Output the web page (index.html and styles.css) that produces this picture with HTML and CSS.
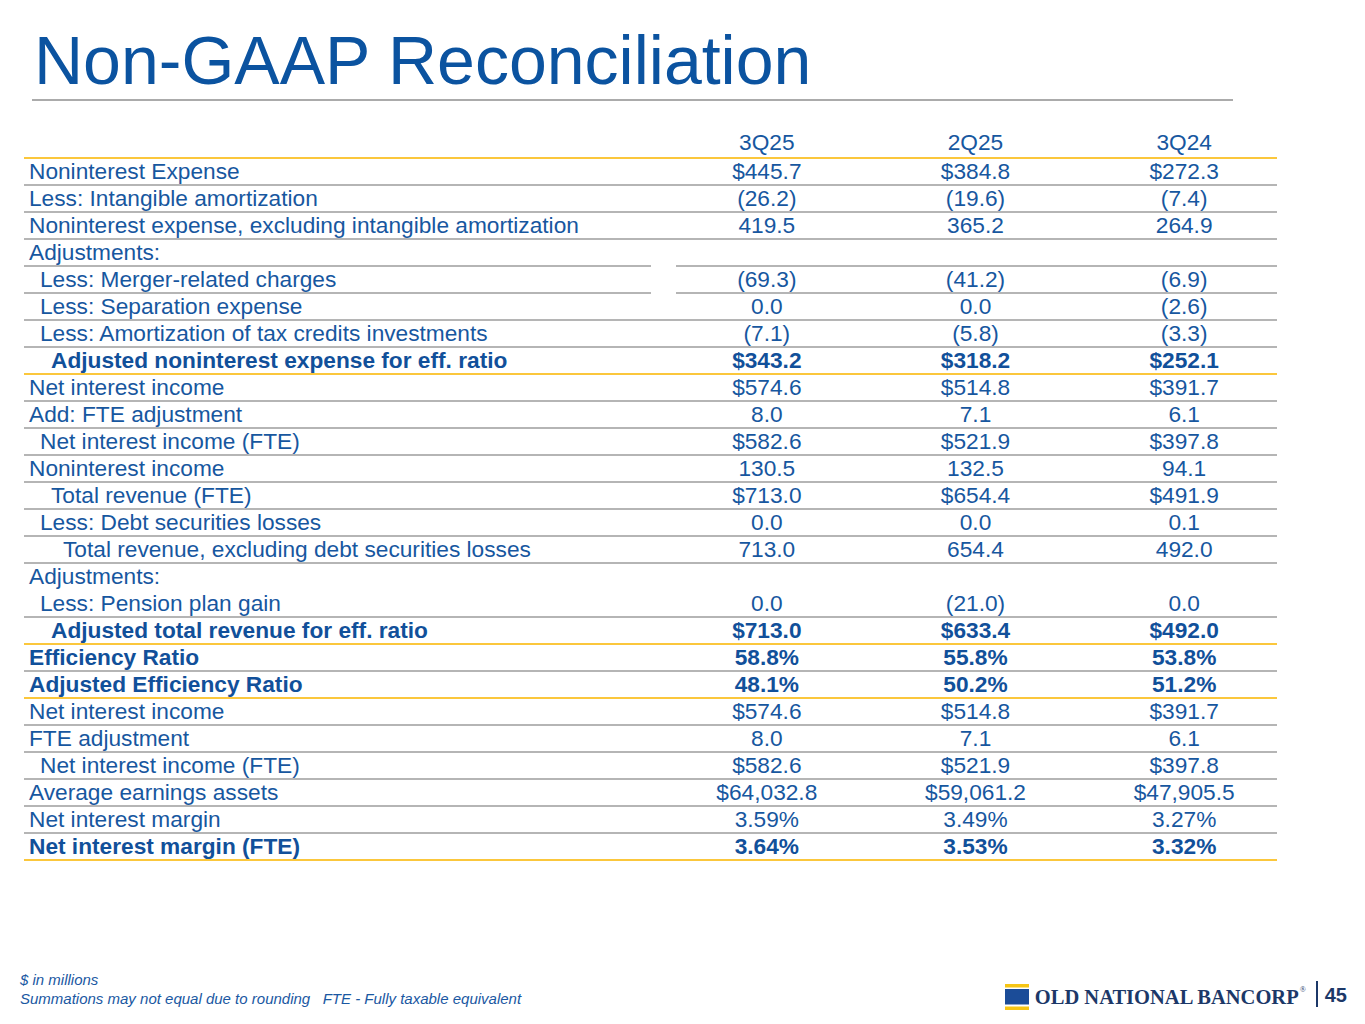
FILE: index.html
```html
<!DOCTYPE html>
<html lang="en">
<head>
<meta charset="utf-8">
<title>Non-GAAP Reconciliation</title>
<link rel="stylesheet" href="styles.css">
</head>
<body>
<div class="slide">
  <h1 class="title">Non-GAAP Reconciliation</h1>
  <div class="rule"></div>

  <div class="table">
    <div class="row head"><div class="label"></div><div class="num">3Q25</div><div class="num">2Q25</div><div class="num">3Q24</div></div>
    <div class="row"><div class="label">Noninterest Expense</div><div class="num">$445.7</div><div class="num">$384.8</div><div class="num">$272.3</div></div>
    <div class="row"><div class="label">Less: Intangible amortization</div><div class="num">(26.2)</div><div class="num">(19.6)</div><div class="num">(7.4)</div></div>
    <div class="row"><div class="label">Noninterest expense, excluding intangible amortization</div><div class="num">419.5</div><div class="num">365.2</div><div class="num">264.9</div></div>
    <div class="row split"><div class="label">Adjustments:</div><div class="num gap"></div><div class="num"></div><div class="num"></div></div>
    <div class="row split"><div class="label i1">Less: Merger-related charges</div><div class="num gap">(69.3)</div><div class="num">(41.2)</div><div class="num">(6.9)</div></div>
    <div class="row"><div class="label i1">Less: Separation expense</div><div class="num">0.0</div><div class="num">0.0</div><div class="num">(2.6)</div></div>
    <div class="row"><div class="label i1">Less: Amortization of tax credits investments</div><div class="num">(7.1)</div><div class="num">(5.8)</div><div class="num">(3.3)</div></div>
    <div class="row bold gold"><div class="label i2">Adjusted noninterest expense for eff. ratio</div><div class="num">$343.2</div><div class="num">$318.2</div><div class="num">$252.1</div></div>
    <div class="row"><div class="label">Net interest income</div><div class="num">$574.6</div><div class="num">$514.8</div><div class="num">$391.7</div></div>
    <div class="row"><div class="label">Add: FTE adjustment</div><div class="num">8.0</div><div class="num">7.1</div><div class="num">6.1</div></div>
    <div class="row"><div class="label i1">Net interest income (FTE)</div><div class="num">$582.6</div><div class="num">$521.9</div><div class="num">$397.8</div></div>
    <div class="row"><div class="label">Noninterest income</div><div class="num">130.5</div><div class="num">132.5</div><div class="num">94.1</div></div>
    <div class="row"><div class="label i2">Total revenue (FTE)</div><div class="num">$713.0</div><div class="num">$654.4</div><div class="num">$491.9</div></div>
    <div class="row"><div class="label i1">Less: Debt securities losses</div><div class="num">0.0</div><div class="num">0.0</div><div class="num">0.1</div></div>
    <div class="row"><div class="label i3">Total revenue, excluding debt securities losses</div><div class="num">713.0</div><div class="num">654.4</div><div class="num">492.0</div></div>
    <div class="row none"><div class="label">Adjustments:</div><div class="num"></div><div class="num"></div><div class="num"></div></div>
    <div class="row"><div class="label i1">Less: Pension plan gain</div><div class="num">0.0</div><div class="num">(21.0)</div><div class="num">0.0</div></div>
    <div class="row bold gold"><div class="label i2">Adjusted total revenue for eff. ratio</div><div class="num">$713.0</div><div class="num">$633.4</div><div class="num">$492.0</div></div>
    <div class="row bold"><div class="label">Efficiency Ratio</div><div class="num">58.8%</div><div class="num">55.8%</div><div class="num">53.8%</div></div>
    <div class="row bold gold"><div class="label">Adjusted Efficiency Ratio</div><div class="num">48.1%</div><div class="num">50.2%</div><div class="num">51.2%</div></div>
    <div class="row"><div class="label">Net interest income</div><div class="num">$574.6</div><div class="num">$514.8</div><div class="num">$391.7</div></div>
    <div class="row"><div class="label">FTE adjustment</div><div class="num">8.0</div><div class="num">7.1</div><div class="num">6.1</div></div>
    <div class="row"><div class="label i1">Net interest income (FTE)</div><div class="num">$582.6</div><div class="num">$521.9</div><div class="num">$397.8</div></div>
    <div class="row"><div class="label">Average earnings assets</div><div class="num">$64,032.8</div><div class="num">$59,061.2</div><div class="num">$47,905.5</div></div>
    <div class="row"><div class="label">Net interest margin</div><div class="num">3.59%</div><div class="num">3.49%</div><div class="num">3.27%</div></div>
    <div class="row bold gold"><div class="label">Net interest margin (FTE)</div><div class="num">3.64%</div><div class="num">3.53%</div><div class="num">3.32%</div></div>
  </div>

  <footer class="footer">
    <div class="notes">
      <div>$ in millions</div>
      <div>Summations may not equal due to rounding&nbsp;&nbsp; FTE - Fully taxable equivalent</div>
    </div>
    <div class="brand">
      <svg class="emblem" width="24" height="27" viewBox="0 0 24 27" aria-hidden="true">
        <rect x="0" y="0" width="24" height="3.5" fill="#f6c514"/>
        <rect x="0" y="5" width="24" height="15.5" fill="#1b4c98"/>
        <rect x="0" y="22.5" width="24" height="3.5" fill="#f6c514"/>
      </svg>
      <span class="name">OLD NATIONAL BANCORP</span><span class="reg">®</span>
      <span class="vbar"></span>
      <span class="page">45</span>
    </div>
  </footer>
</div>
</body>
</html>
```

FILE: styles.css
```css
* { box-sizing: border-box; }

html, body {
  margin: 0;
  padding: 0;
  background: #ffffff;
}

.slide {
  width: 1365px;
  height: 1024px;
  display: flex;
  flex-direction: column;
  font-family: "Liberation Sans", Arial, sans-serif;
  color: #17579f;
  overflow: hidden;
}

.title {
  margin: 22px 0 0 34px;
  font-weight: normal;
  font-size: 68px;
  line-height: 76px;
  color: #0b53a0;
}

.rule {
  margin: 1px 0 0 32px;
  width: 1201px;
  height: 2px;
  background: #ababab;
}

.table {
  margin: 29px 0 0 24px;
  width: 1253px;
  font-size: 22.7px;
}

.row {
  display: grid;
  grid-template-columns: 627px repeat(3, 1fr);
  line-height: 25px;
  height: 27px;
  border-bottom: 2px solid #b5b5b5;
  white-space: nowrap;
}

.row.head {
  height: 29px;
  padding-bottom: 2px;
  border-bottom-color: #fbc73c;
}

.row.gold { border-bottom-color: #fbc73c; }
.row.none { border-bottom-color: transparent; }

.row.split { border-bottom: none; }
.row.split > div {
  border-bottom: 2px solid #b5b5b5;
}
.row.split > .gap {
  border-bottom-color: transparent;
  background-image: linear-gradient(#b5b5b5, #b5b5b5);
  background-repeat: no-repeat;
  background-origin: border-box;
  background-size: calc(100% - 25px) 2px;
  background-position: right bottom;
}

.row.bold {
  font-weight: bold;
  color: #11509a;
}

.label { padding-left: 5px; }
.label.i1 { padding-left: 16px; }
.label.i2 { padding-left: 27px; }
.label.i3 { padding-left: 39px; }

.num {
  text-align: center;
  padding-left: 23px;
}

.footer {
  margin-top: auto;
  height: 54px;
  display: flex;
  align-items: flex-start;
}

.notes {
  padding-left: 20px;
  font-size: 15px;
  line-height: 19px;
  font-style: italic;
  color: #1a58a2;
}

.brand {
  margin-left: auto;
  margin-right: 18px;
  display: flex;
  align-items: flex-start;
}

.emblem {
  display: block;
  margin-top: 14px;
}

.name {
  margin: 17px 0 0 6px;
  font-family: "Liberation Serif", "Times New Roman", serif;
  font-weight: bold;
  font-size: 20.5px;
  line-height: 20px;
  letter-spacing: 0;
  color: #1c3868;
}

.reg {
  margin: 16px 0 0 1px;
  font-family: "Liberation Serif", serif;
  font-size: 8px;
  line-height: 8px;
  color: #1c3868;
}

.vbar {
  width: 2px;
  height: 26px;
  margin: 11px 0 0 10px;
  background: #1c3868;
}

.page {
  margin: 15px 0 0 7px;
  font-weight: bold;
  font-size: 20px;
  line-height: 20px;
  color: #1c3868;
}
```
